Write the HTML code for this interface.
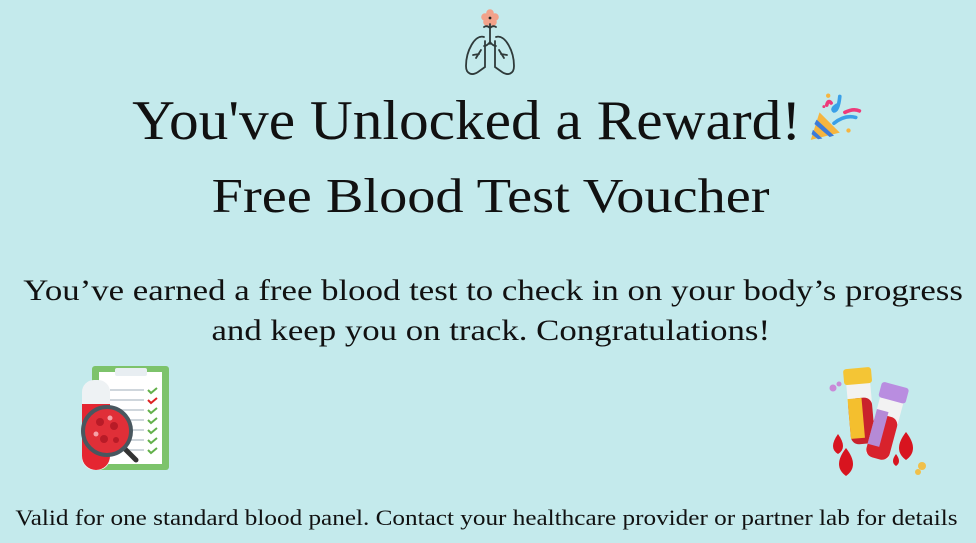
<!DOCTYPE html>
<html><head><meta charset="utf-8"><style>
html,body{margin:0;padding:0}
body{width:976px;height:543px;background:#c4eaec;position:relative;overflow:hidden;font-family:"Liberation Serif",serif;color:#111}
.t{position:absolute;width:1200px;text-align:center;white-space:nowrap}
.t span{display:inline-block}
</style></head><body>
<svg style="position:absolute;left:458px;top:6px" width="66" height="72" viewBox="0 0 64 72">
<g fill="#f2a28a"><circle cx="31" cy="7" r="3.8"/><circle cx="36" cy="11" r="3.8"/><circle cx="34" cy="16" r="3.8"/><circle cx="28" cy="16" r="3.8"/><circle cx="26" cy="11" r="3.8"/><circle cx="31" cy="12" r="3"/></g>
<circle cx="31" cy="12" r="1.4" fill="#222"/>
<g fill="none" stroke="#2f3a3a" stroke-width="1.8" stroke-linecap="round">
<path d="M31 18 V38 M31 22 q-3-3-6-1 M31 22 q3-3 6-1"/>
<path d="M31 36 q-3 4-6 4 M31 36 q3 4 6 4"/>
<path d="M25 31 C16 28 7 45 7 60 c0 8 6 10 12 6 l7-5 V35"/>
<path d="M37 31 C46 28 55 45 55 60 c0 8-6 10-12 6 l-7-5 V35"/>
<path d="M22 44 l-5 8 M20 48 l-6 1 M40 44 l5 8 M42 48 l6 1"/>
</g></svg>
<div class="t" style="left:-133px;top:89px;font-size:56px"><span style="transform:scaleX(1.06)">You've Unlocked a Reward!</span></div>
<svg style="position:absolute;left:805px;top:88px" width="58" height="56" viewBox="0 0 80 70">
<path d="M20 30 L48 58 L8 68 Z" fill="#f6b53f"/>
<path d="M16 40 L40 62 L34 64 L13 46Z M11 54 L24 66 L18 67 L9 60Z" fill="#3d7bd8"/>
<g fill="none" stroke-width="5" stroke-linecap="round"><path d="M30 20 q2-8 6-3" stroke="#ee3a7a"/><path d="M48 8 q-2 20 -8 20 q-4-3 4-8" stroke="#3aa0e8"/><path d="M55 30 q12-6 20-2" stroke="#ee3a7a"/><path d="M40 45 q15-12 30-8" stroke="#3aa0e8"/></g>
<circle cx="32" cy="7" r="3" fill="#f6b53f"/><circle cx="60" cy="55" r="3" fill="#f6b53f"/><circle cx="26" cy="22" r="2" fill="#ee3a7a"/></svg>
<div class="t" style="left:-109px;top:167px;font-size:49px"><span style="transform:scaleX(1.15)">Free Blood Test Voucher</span></div>
<div class="t" style="left:-107px;top:274px;font-size:30px"><span style="transform:scaleX(1.16)">You’ve earned a free blood test to check in on your body’s progress</span></div>
<div class="t" style="left:-109px;top:314px;font-size:30px"><span style="transform:scaleX(1.16)">and keep you on track. Congratulations!</span></div>
<svg style="position:absolute;left:70px;top:364px" width="104" height="112" viewBox="0 0 104 112">
<rect x="22" y="2" width="77" height="104" rx="3" fill="#7dc36b"/>
<rect x="29" y="8" width="63" height="92" fill="#fff"/>
<rect x="45" y="4" width="32" height="8" rx="2" fill="#e8eef2"/>
<g stroke="#cfd6dc" stroke-width="2"><path d="M40 26h34M40 36h34M40 46h34M40 56h34M40 66h34M40 76h34M40 86h34"/></g>
<g fill="none" stroke="#62b04a" stroke-width="2"><path d="M78 26l3 3 6-5M78 46l3 3 6-5M78 56l3 3 6-5M78 66l3 3 6-5M78 76l3 3 6-5M78 86l3 3 6-5"/></g>
<path d="M78 36l3 3 6-5" fill="none" stroke="#d22" stroke-width="2"/>
<rect x="12" y="16" width="28" height="90" rx="12" fill="#eef2f4"/>
<path d="M12 40 h28 v52 a14 14 0 0 1 -28 0Z" fill="#e52631"/>
<line x1="50" y1="80" x2="66" y2="96" stroke="#333" stroke-width="5" stroke-linecap="round"/>
<circle cx="37" cy="67" r="24" fill="#e02f38" stroke="#49575f" stroke-width="4"/>
<g fill="#b81b27"><circle cx="30" cy="58" r="4"/><circle cx="44" cy="62" r="4"/><circle cx="34" cy="75" r="4"/><circle cx="46" cy="76" r="3"/></g>
<g fill="#f6a2a8"><circle cx="26" cy="70" r="2.5"/><circle cx="40" cy="54" r="2.5"/></g></svg>
<svg style="position:absolute;left:818px;top:364px" width="110" height="112" viewBox="0 0 110 112">
<g transform="rotate(-5 42 40)"><rect x="30" y="18" width="24" height="58" rx="3" fill="#f2f2f2"/><rect x="30" y="34" width="24" height="46" rx="8" fill="#c9222c"/><rect x="30" y="34" width="14" height="40" fill="#f4bf2e"/><rect x="28" y="4" width="28" height="16" rx="3" fill="#f4c535"/></g>
<g transform="rotate(15 70 50)"><rect x="58" y="32" width="24" height="62" rx="3" fill="#f2f2f2"/><rect x="58" y="52" width="24" height="44" rx="8" fill="#d8222c"/><rect x="58" y="48" width="12" height="36" fill="#b58ad6"/><rect x="56" y="20" width="28" height="16" rx="3" fill="#b98de0"/></g>
<g fill="#d8141f"><path d="M20 70 q10 14 0 20 q-10-6 0-20Z"/><path d="M28 84 q14 18 0 28 q-14-10 0-28Z"/><path d="M88 68 q14 18 0 28 q-14-10 0-28Z"/><path d="M78 90 q6 8 0 12 q-6-4 0-12Z"/></g>
<g fill="#c98ad8"><circle cx="15" cy="24" r="3.5"/><circle cx="21" cy="20" r="2.5"/></g>
<g fill="#f0c04a"><circle cx="104" cy="102" r="4"/><circle cx="100" cy="108" r="3"/></g></svg>
<div class="t" style="left:-114px;top:505px;font-size:22px"><span style="transform:scaleX(1.145)">Valid for one standard blood panel. Contact your healthcare provider or partner lab for details</span></div>
</body></html>
